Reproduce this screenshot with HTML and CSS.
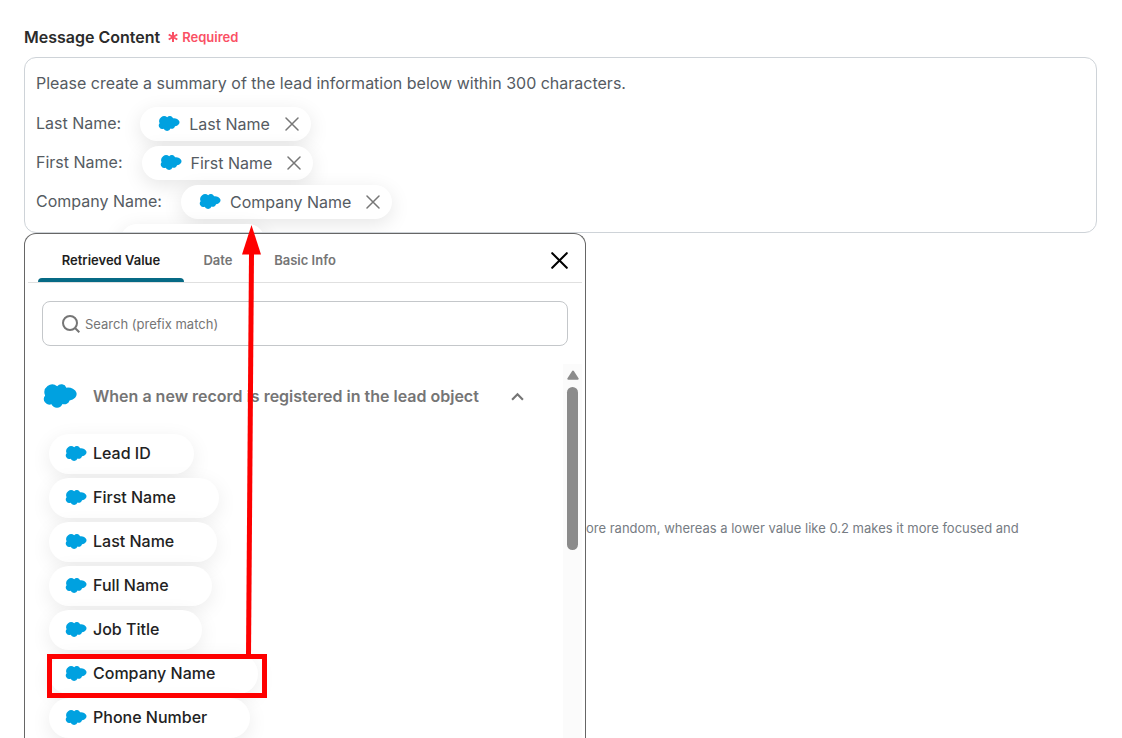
FILE: index.html
```html
<!DOCTYPE html>
<html lang="en">
<head>
    <meta charset="UTF-8">
    <meta name="viewport" content="width=device-width, initial-scale=1.0">
    <title>Message Content</title>
    <link rel="stylesheet" href="styles.css">
</head>
<body>
    <svg class="defs" aria-hidden="true">
        <symbol id="cloud" viewBox="2 1 96 67">
            <path d="M42 7A15 15 0 0 1 68 11A24 18 0 1 1 77 47A15 15 0 0 1 57 57A17 17 0 0 1 26 58A16 16 0 0 1 8 33A22 22 0 0 1 42 7z"/>
        </symbol>
        <symbol id="cross" viewBox="0 0 14 14">
            <path d="M1 1l12 12M13 1L1 13"/>
        </symbol>
    </svg>

    <div class="field-label" id="message-label">
        <span class="field-name">Message Content</span>
        <svg class="asterisk" viewBox="0 0 10 10"><path d="M5 0v10M0.7 2.5l8.6 5M9.3 2.5l-8.6 5"/></svg>
        <span class="required">Required</span>
    </div>

    <div class="editor" role="textbox" contenteditable="true" spellcheck="false" aria-labelledby="message-label">
        <p class="message">Please create a summary of the lead information below within 300 characters.</p>
        <div class="line">
            <span class="line-label">Last Name:</span>
            <span class="token"><svg class="cloud"><use href="#cloud"/></svg>Last Name<button class="remove" aria-label="Remove"><svg><use href="#cross"/></svg></button></span>
        </div>
        <div class="line">
            <span class="line-label">First Name:</span>
            <span class="token"><svg class="cloud"><use href="#cloud"/></svg>First Name<button class="remove" aria-label="Remove"><svg><use href="#cross"/></svg></button></span>
        </div>
        <div class="line">
            <span class="line-label">Company Name:</span>
            <span class="token"><svg class="cloud"><use href="#cloud"/></svg>Company Name<button class="remove" aria-label="Remove"><svg><use href="#cross"/></svg></button></span>
        </div>
        <div class="line line-empty">
            <span class="token"></span>
        </div>
    </div>

    <div class="below">
        <div class="picker">
            <div class="tabs" role="tablist">
                <button class="tab active" role="tab" aria-selected="true">Retrieved Value</button>
                <button class="tab" role="tab">Date</button>
                <button class="tab" role="tab">Basic Info</button>
                <button class="close" aria-label="Close"><svg><use href="#cross"/></svg></button>
            </div>
            <label class="search">
                <svg viewBox="0 0 18 18"><circle cx="8" cy="8" r="7"/><path d="M13 13l4.3 4.3"/></svg>
                <input type="text" placeholder="Search (prefix match)" aria-label="Search (prefix match)">
            </label>
            <div class="results">
                <div class="group">
                    <button class="group-title">
                        <svg class="cloud-large"><use href="#cloud"/></svg>
                        <span>When a new record is registered in the lead object</span>
                        <svg class="chevron" viewBox="0 0 12 8"><path d="M1 7l5-5 5 5"/></svg>
                    </button>
                    <div class="values">
                        <button class="value"><svg class="cloud"><use href="#cloud"/></svg>Lead ID</button>
                        <button class="value"><svg class="cloud"><use href="#cloud"/></svg>First Name</button>
                        <button class="value"><svg class="cloud"><use href="#cloud"/></svg>Last Name</button>
                        <button class="value"><svg class="cloud"><use href="#cloud"/></svg>Full Name</button>
                        <button class="value"><svg class="cloud"><use href="#cloud"/></svg>Job Title</button>
                        <button class="value"><svg class="cloud"><use href="#cloud"/></svg>Company Name</button>
                        <button class="value"><svg class="cloud"><use href="#cloud"/></svg>Phone Number</button>
                    </div>
                </div>
                <div class="scrollbar">
                    <svg viewBox="0 0 12 10"><path d="M6 1.5L10.7 8.7H1.3z"/></svg>
                    <div class="thumb"></div>
                </div>
            </div>
        </div>
        <p class="hint">ore random, whereas a lower value like 0.2 makes it more focused and</p>
    </div>

    <!-- highlight box and arrow from the list to the inserted value -->
    <svg class="callout" viewBox="0 0 220 474">
        <path class="arrow-line" d="M204.5 28L201.5 431"/>
        <path class="arrow-head" d="M204.5 0L214 29.5H195z"/>
        <rect x="2.5" y="431.5" width="215" height="39"/>
    </svg>
</body>
</html>
```

FILE: styles.css
```css
* {
    box-sizing: border-box;
}
body {
    font-family: Inter, "Liberation Sans", sans-serif;
    margin: 0;
    padding: 24px 25px 0 24px;
    height: 100vh;
    display: flex;
    flex-direction: column;
    position: relative;
    overflow: hidden;
    background: #fff;
    color: #555b62;
}
button {
    font: inherit;
    color: inherit;
    background: none;
    border: none;
    padding: 0;
    cursor: pointer;
}
p {
    margin: 0;
}
svg {
    flex: none;
}
.defs {
    position: absolute;
    width: 0;
    height: 0;
}
.cloud {
    width: 22px;
    height: 15px;
    fill: #00a1e0;
}
.field-label {
    display: flex;
    align-items: center;
    height: 25px;
    margin-bottom: 8px;
}
.field-name {
    font-size: 16px;
    font-weight: 600;
    color: #2b2b2b;
}
.asterisk {
    width: 10px;
    height: 10px;
    margin: 0 4px 0 8px;
    stroke: #fa5064;
    stroke-width: 2;
}
.required {
    font-size: 13px;
    font-weight: 600;
    color: #fa5064;
}
.editor {
    flex: none;
    height: 176px;
    padding: 13px 11px 0;
    border: 1px solid #ced3d8;
    border-radius: 12px;
    overflow: hidden;
    font-size: 16px;
    outline: none;
}
.message {
    line-height: 24px;
    margin-bottom: 9px;
}
.line {
    display: flex;
    align-items: center;
    gap: 19px;
    height: 39px;
}
.line-label {
    padding-bottom: 2px;
}
.line-empty {
    padding-left: 84px;
}
.token {
    display: flex;
    align-items: center;
    height: 34px;
    padding: 0 12px 0 18px;
    border-radius: 17px;
    background: #fff;
    box-shadow: 0 5px 20px rgba(0, 0, 0, 0.1);
}
.token .cloud {
    margin-right: 9px;
}
.line-empty .token {
    width: 145px;
}
.remove {
    display: flex;
    margin-left: 15px;
}
.remove svg {
    width: 14px;
    height: 14px;
    stroke: #777;
    stroke-width: 1.5;
    stroke-linecap: round;
}
.below {
    flex: 1;
    display: flex;
    min-height: 0;
}
.picker {
    flex: none;
    width: 562px;
    display: flex;
    flex-direction: column;
    padding: 0 3px;
    background: #fff;
    border: 1px solid #666;
    border-bottom: none;
    border-radius: 12px 12px 0 0;
}
.tabs {
    flex: none;
    display: grid;
    grid-template-columns: 146px 68px 106px 1fr;
    height: 49px;
    padding: 0 14px 0 10px;
    border-bottom: 1px solid #e0e0e0;
}
.tab {
    position: relative;
    padding: 4px 0 0;
    font-size: 13px;
    font-weight: 600;
    color: #757575;
}
.tab.active {
    color: #1e1e1e;
}
.tab.active::after {
    content: "";
    position: absolute;
    left: 0;
    right: 0;
    bottom: 0;
    height: 4px;
    border-radius: 4px 4px 0 0;
    background: #066a85;
}
.close {
    display: flex;
    align-items: center;
    justify-self: end;
    padding-top: 5px;
}
.close svg {
    width: 17px;
    height: 17px;
    stroke: #000;
    stroke-width: 1.7;
    stroke-linecap: round;
}
.search {
    flex: none;
    display: flex;
    align-items: center;
    gap: 5px;
    height: 45px;
    margin: 18px 14px;
    padding: 0 19px;
    border: 1px solid #c4c7ca;
    border-radius: 8px;
}
.search svg {
    width: 18px;
    height: 18px;
    fill: none;
    stroke: #757575;
    stroke-width: 2;
}
.search input {
    flex: 1;
    padding: 0;
    border: none;
    outline: none;
    font: 13px Inter, "Liberation Sans", sans-serif;
}
.search input::placeholder {
    color: #757575;
}
.results {
    flex: 1;
    display: flex;
    min-height: 0;
    overflow: hidden;
}
.group {
    flex: 1;
    padding: 17px 15px 0;
}
.group-title {
    display: flex;
    align-items: center;
    width: 100%;
    height: 30px;
    padding-right: 24px;
    font-size: 16px;
    font-weight: 600;
    color: #757575;
}
.cloud-large {
    width: 34px;
    height: 24px;
    margin-right: 16px;
    fill: #00a1e0;
}
.chevron {
    width: 13px;
    height: 9px;
    margin-left: auto;
    fill: none;
    stroke: #757575;
    stroke-width: 2;
}
.values {
    display: flex;
    flex-direction: column;
    align-items: flex-start;
    gap: 4px;
    padding: 23px 6px;
}
.value {
    flex: none;
    display: flex;
    align-items: center;
    gap: 6px;
    height: 40px;
    padding: 0 43px 2px 16px;
    border-radius: 20px;
    background: #fff;
    box-shadow: 0 5px 20px rgba(0, 0, 0, 0.08);
    font-size: 16px;
    font-weight: 500;
    color: #222;
}
.scrollbar {
    width: 19px;
    padding: 6px 4px 0;
    background: #fbfbfb;
}
.scrollbar svg {
    display: block;
    width: 12px;
    height: 10px;
    margin-bottom: 7px;
    fill: #8b8b8b;
    stroke: #8b8b8b;
    stroke-width: 2;
    stroke-linejoin: round;
}
.thumb {
    width: 11px;
    height: 163px;
    border-radius: 6px;
    background: #8b8b8b;
}
.hint {
    padding-top: 285px;
    font-size: 13px;
    line-height: 20px;
    color: #767c83;
    white-space: nowrap;
}
.callout {
    position: absolute;
    left: 47px;
    top: 225px;
    width: 220px;
    height: 474px;
    fill: none;
    stroke: #fe0000;
    stroke-width: 5;
    pointer-events: none;
}
.callout .arrow-head {
    fill: #fe0000;
    stroke: none;
}
```
